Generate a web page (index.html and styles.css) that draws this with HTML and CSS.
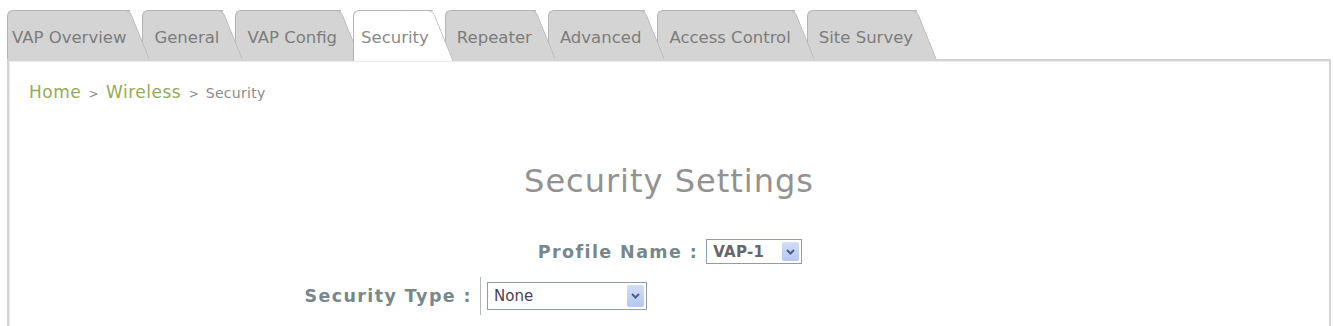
FILE: index.html
```html
<!DOCTYPE html>
<html lang="en">
<head>
  <meta charset="UTF-8" />
  <meta name="viewport" content="width=device-width, initial-scale=1.0"/>
  <title>Security Settings</title>
  <link rel="stylesheet" href="styles.css">
</head>
<body>

  <ul class="tabs">
    <li class="tab">VAP Overview</li>
    <li class="tab">General</li>
    <li class="tab">VAP Config</li>
    <li class="tab active">Security</li>
    <li class="tab">Repeater</li>
    <li class="tab">Advanced</li>
    <li class="tab">Access Control</li>
    <li class="tab">Site Survey</li>
  </ul>

  <div class="panel">
    <div class="crumbs">
      <a href="#">Home</a> <span class="sep">&gt;</span> <a href="#">Wireless</a> <span class="current"><span class="sep">&gt;</span> Security</span>
    </div>

    <h1 class="title">Security Settings</h1>

    <div class="profile-row">
      <span class="label">Profile Name :</span>
      <div class="select small">
        <span class="value bold">VAP-1</span>
        <span class="arrow">
          <svg width="9" height="6" viewBox="0 0 9 6"><path d="M1 1 L4.5 4.5 L8 1" fill="none" stroke="#4a5f8a" stroke-width="2"/></svg>
        </span>
      </div>
    </div>

    <div class="type-row">
      <div class="label cell-label">Security Type :</div>
      <div class="cell-value">
        <div class="select wide">
          <span class="value">None</span>
          <span class="arrow">
            <svg width="9" height="6" viewBox="0 0 9 6"><path d="M1 1 L4.5 4.5 L8 1" fill="none" stroke="#4a5f8a" stroke-width="2"/></svg>
          </span>
        </div>
      </div>
    </div>
  </div>

</body>
</html>
```

FILE: styles.css
```css
body {
  margin: 0;
  padding: 10px 3px 0 7px;
  background: #fff;
  font-family: 'DejaVu Sans', Verdana, sans-serif;
  height: 316px;
  overflow: hidden;
}

/* tab strip */
.tabs {
  list-style: none;
  margin: 0;
  padding: 0;
  height: 49px;
  display: flex;
  align-items: flex-end;
  position: relative;
  z-index: 2;
}

.tab {
  position: relative;
  box-sizing: border-box;
  height: 49px;
  padding: 5px 4px 0 11px;
  margin-right: 12px;
  display: flex;
  align-items: center;
  background: #d4d4d4;
  border: 1px solid #b4b4b4;
  border-right: 0;
  border-bottom: 0;
  border-radius: 6px 0 0 0;
  font-size: 16.5px;
  color: #7c7c7c;
  white-space: nowrap;
}

.tab:first-child {
  padding-left: 4px;
}

.tab::after {
  content: '';
  position: absolute;
  top: -1px;
  bottom: 0;
  right: 0;
  width: 26px;
  box-sizing: border-box;
  background: inherit;
  border-top: 1px solid #b4b4b4;
  border-right: 1px solid #b4b4b4;
  border-radius: 0 6px 0 0;
  transform: skewX(22deg);
  transform-origin: right top;
  z-index: -1;
}

.tab:nth-child(1) { z-index: 9; }
.tab:nth-child(2) { z-index: 8; }
.tab:nth-child(3) { z-index: 7; }
.tab:nth-child(5) { z-index: 5; }
.tab:nth-child(6) { z-index: 4; }
.tab:nth-child(7) { z-index: 3; }
.tab:nth-child(8) { z-index: 2; }

.tab.active {
  z-index: 10;
  background: #fff;
  height: 51px;
  margin-bottom: -2px;
  padding-bottom: 2px;
  padding-left: 7px;
  color: #8a8a8a;
}

/* content panel */
.panel {
  height: 280px;
  border: 2px solid #d3d3d3;
  border-bottom: 0;
  box-shadow: inset 1px 1px 1px #ececec;
}

.crumbs {
  padding: 21px 0 0 20px;
  font-size: 17px;
  line-height: 20px;
  color: #8a8a8a;
}

.crumbs a {
  color: #93ab55;
  text-decoration: none;
  letter-spacing: 0.5px;
}

.crumbs .sep {
  display: inline-block;
  margin: 0 2px;
  font-size: 12px;
  color: #8a8a8a;
}

.crumbs .current {
  font-size: 14px;
  letter-spacing: 0.3px;
}

.title {
  margin: 57px 0 0;
  text-align: center;
  font-size: 32px;
  line-height: 40px;
  font-weight: normal;
  letter-spacing: 1px;
  color: #929292;
}

.label {
  font-size: 17.5px;
  font-weight: bold;
  letter-spacing: 1.4px;
  color: #77888d;
}

.profile-row {
  margin-top: 38px;
  display: flex;
  justify-content: center;
  align-items: center;
  gap: 8px;
  padding-left: 2px;
}

.select {
  box-sizing: border-box;
  display: flex;
  align-items: center;
  justify-content: space-between;
  border: 1px solid #8f9cb0;
  background: #fff;
  padding: 2px;
}

.select.small {
  width: 96px;
  height: 25px;
}

.select.wide {
  width: 160px;
  height: 28px;
}

.select .value {
  padding-left: 4px;
  font-family: 'DejaVu Sans', Tahoma, sans-serif;
  font-size: 15px;
  color: #4b3f57;
}

.select .value.bold {
  font-weight: bold;
  color: #666;
  letter-spacing: 0.3px;
}

.select .arrow {
  width: 17px;
  height: 100%;
  display: flex;
  align-items: center;
  justify-content: center;
  background: linear-gradient(#d2ddf7, #b6c7ee);
  border-radius: 2px;
}

.type-row {
  margin-top: 13px;
  display: grid;
  grid-template-columns: 471px auto;
  align-items: center;
}

.cell-label {
  text-align: right;
  padding-right: 8px;
}

.cell-value {
  height: 38px;
  display: flex;
  align-items: center;
  padding-left: 6px;
  border-left: 1px solid #b9b9b9;
}
```
